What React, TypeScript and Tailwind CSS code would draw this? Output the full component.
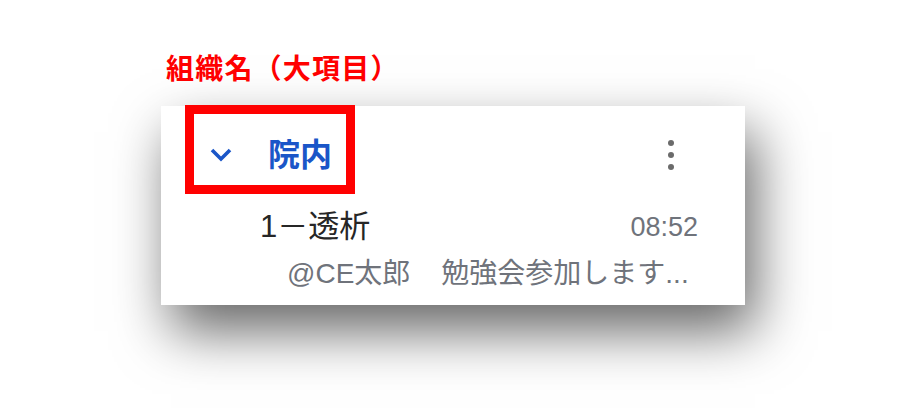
export default function App() {
  return (
    <div
      className="relative h-[418px] w-[903px] overflow-hidden bg-white"
      style={{ fontFamily: "'Liberation Sans', 'Noto Sans CJK JP', sans-serif" }}
    >
      <div className="pl-[166px] pt-[53px] text-[28px] font-bold leading-[34px] tracking-[1.2px] text-[#ff0000]">
        組織名（大項目）
      </div>

      <div className="ml-[161px] mt-[19px] h-[199px] w-[584px] bg-white shadow-[10px_26px_52px_rgba(0,0,0,0.6)]">
        <div className="flex h-[98px] items-center">
          <svg className="ml-[49px] h-[16px] w-[22px]" viewBox="0 0 22 16">
            <path d="M2 3 L11 12 L20 3" fill="none" stroke="#1a56c8" strokeWidth="3.6" />
          </svg>
          <span className="ml-[36px] text-[32px] font-bold text-[#1a56c8]">院内</span>
          <div className="ml-auto mr-[71px] flex flex-col gap-[6px]">
            <span className="h-[6px] w-[6px] rounded-full bg-[#6b6b6b]" />
            <span className="h-[6px] w-[6px] rounded-full bg-[#6b6b6b]" />
            <span className="h-[6px] w-[6px] rounded-full bg-[#6b6b6b]" />
          </div>
        </div>
        <div className="flex h-[46px] items-center pr-[47px] pl-[99px]">
          <span className="text-[31px] text-[#262626]">1－透析</span>
          <span className="ml-auto text-[27px] text-[#6f737b]">08:52</span>
        </div>
        <div className="flex h-[48px] items-center pl-[126px] text-[28px] text-[#6f737b]">
          <span>@CE太郎</span>
          <span className="ml-[31px]">勉強会参加します...</span>
        </div>
      </div>

      <div className="absolute top-[105px] left-[185px] h-[89px] w-[170px] border-[9px] border-[#ff0000]" />
    </div>
  );
}
